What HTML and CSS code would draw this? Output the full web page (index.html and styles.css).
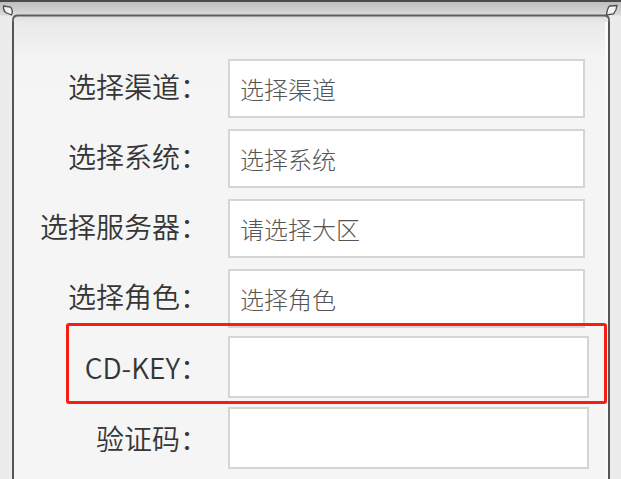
FILE: index.html
```html
<!DOCTYPE html>
<html lang="zh-CN">
<head>
<meta charset="utf-8">
<title>CD-KEY 兑换</title>
<link rel="stylesheet" href="styles.css">
</head>
<body>
<div class="window">
  <svg class="cap" width="621" height="22" viewBox="0 0 621 22" aria-hidden="true">
    <defs>
      <linearGradient id="band" x1="0" y1="0" x2="0" y2="1">
        <stop offset="0" stop-color="#bdbdbd"/>
        <stop offset="1" stop-color="#dcdcdc"/>
      </linearGradient>
      <linearGradient id="inner" x1="0" y1="0" x2="0" y2="1">
        <stop offset="0" stop-color="#dcdcdc"/>
        <stop offset="1" stop-color="#e9e9e9"/>
      </linearGradient>
    </defs>
    <rect x="0" y="0" width="621" height="22" fill="#ececec"/>
    <rect x="0" y="1.5" width="621" height="14" fill="url(#band)"/>
    <rect x="13" y="16" width="596" height="6" fill="url(#inner)"/>
    <rect x="0" y="0" width="621" height="2" fill="#4a4a4a"/>
    <path d="M13 22 L13 20 Q13 15.5 18 15.5 L604 15.5 Q609 15.5 609 20 L609 22" fill="none" stroke="#5e5e5e" stroke-width="1.8"/>
    <path d="M3.5 6 L10.5 7 Q13.5 10.5 11.5 15 L5.5 12.5 Q3 10 3.5 6 Z" fill="#f2f2f2" stroke="#505050" stroke-width="1.3"/>
    <path d="M609.5 6 L617 5.5 Q616.5 10.5 613.5 14 L606.5 15 Q607 9 609.5 6 Z" fill="#f2f2f2" stroke="#505050" stroke-width="1.3"/>
  </svg>
  <div class="panel">
    <form class="form">
      <div class="row">
        <label class="label">选择渠道：</label>
        <div class="field">选择渠道</div>
      </div>
      <div class="row">
        <label class="label">选择系统：</label>
        <div class="field">选择系统</div>
      </div>
      <div class="row">
        <label class="label">选择服务器：</label>
        <div class="field">请选择大区</div>
      </div>
      <div class="row">
        <label class="label">选择角色：</label>
        <div class="field">选择角色</div>
      </div>
      <div class="row row-tall row-marked">
        <label class="label">CD-KEY：</label>
        <div class="field"></div>
        <div class="mark"></div>
      </div>
      <div class="row row-tall">
        <label class="label">验证码：</label>
        <div class="field"></div>
      </div>
    </form>
  </div>
</div>
</body>
</html>
```

FILE: styles.css
```css
html, body {
  margin: 0;
  padding: 0;
}

body {
  width: 621px;
  height: 479px;
  overflow: hidden;
  background: #ececec;
  font-family: "Noto Sans CJK SC", "Noto Sans", sans-serif;
}

.window {
  width: 621px;
}

.cap {
  display: block;
}

.panel {
  margin-left: 12px;
  width: 594px;
  height: 470px;
  border-left: 2px solid #555;
  border-right: 2px solid #555;
  background: linear-gradient(#e9e9e9 0px, #f3f3f3 34px, #f5f5f5 80px);
  box-shadow: inset -3px 0 0 #fafafa;
}

.form {
  margin: 0;
  padding-top: 37px;
  display: flex;
  flex-direction: column;
}

.row {
  position: relative;
  display: flex;
  align-items: center;
  gap: 20px;
  height: 59px;
}

.row + .row {
  margin-top: 11px;
}

.row + .row-tall {
  margin-top: 8px;
}

.row-tall + .row-tall {
  margin-top: 9px;
}

.label {
  width: 194px;
  flex: none;
  text-align: right;
  font-size: 28px;
  font-weight: 350;
  line-height: 1;
  color: #363636;
  white-space: nowrap;
  padding-bottom: 5px;
}

.field {
  box-sizing: border-box;
  flex: none;
  width: 357px;
  height: 59px;
  display: flex;
  align-items: center;
  padding-left: 10px;
  border: 2px solid #d5d5d5;
  background: #fff;
  font-size: 24px;
  font-weight: 300;
  color: #555;
  line-height: 1;
}

.row-tall {
  height: 62px;
}

.row-tall .label {
  padding-bottom: 0;
}

.row-tall .field {
  width: 361px;
  height: 62px;
}

.mark {
  position: absolute;
  left: 52px;
  top: -13px;
  width: 535px;
  height: 75px;
  border: 3px solid #f81d12;
  border-radius: 3px;
  pointer-events: none;
}
```
